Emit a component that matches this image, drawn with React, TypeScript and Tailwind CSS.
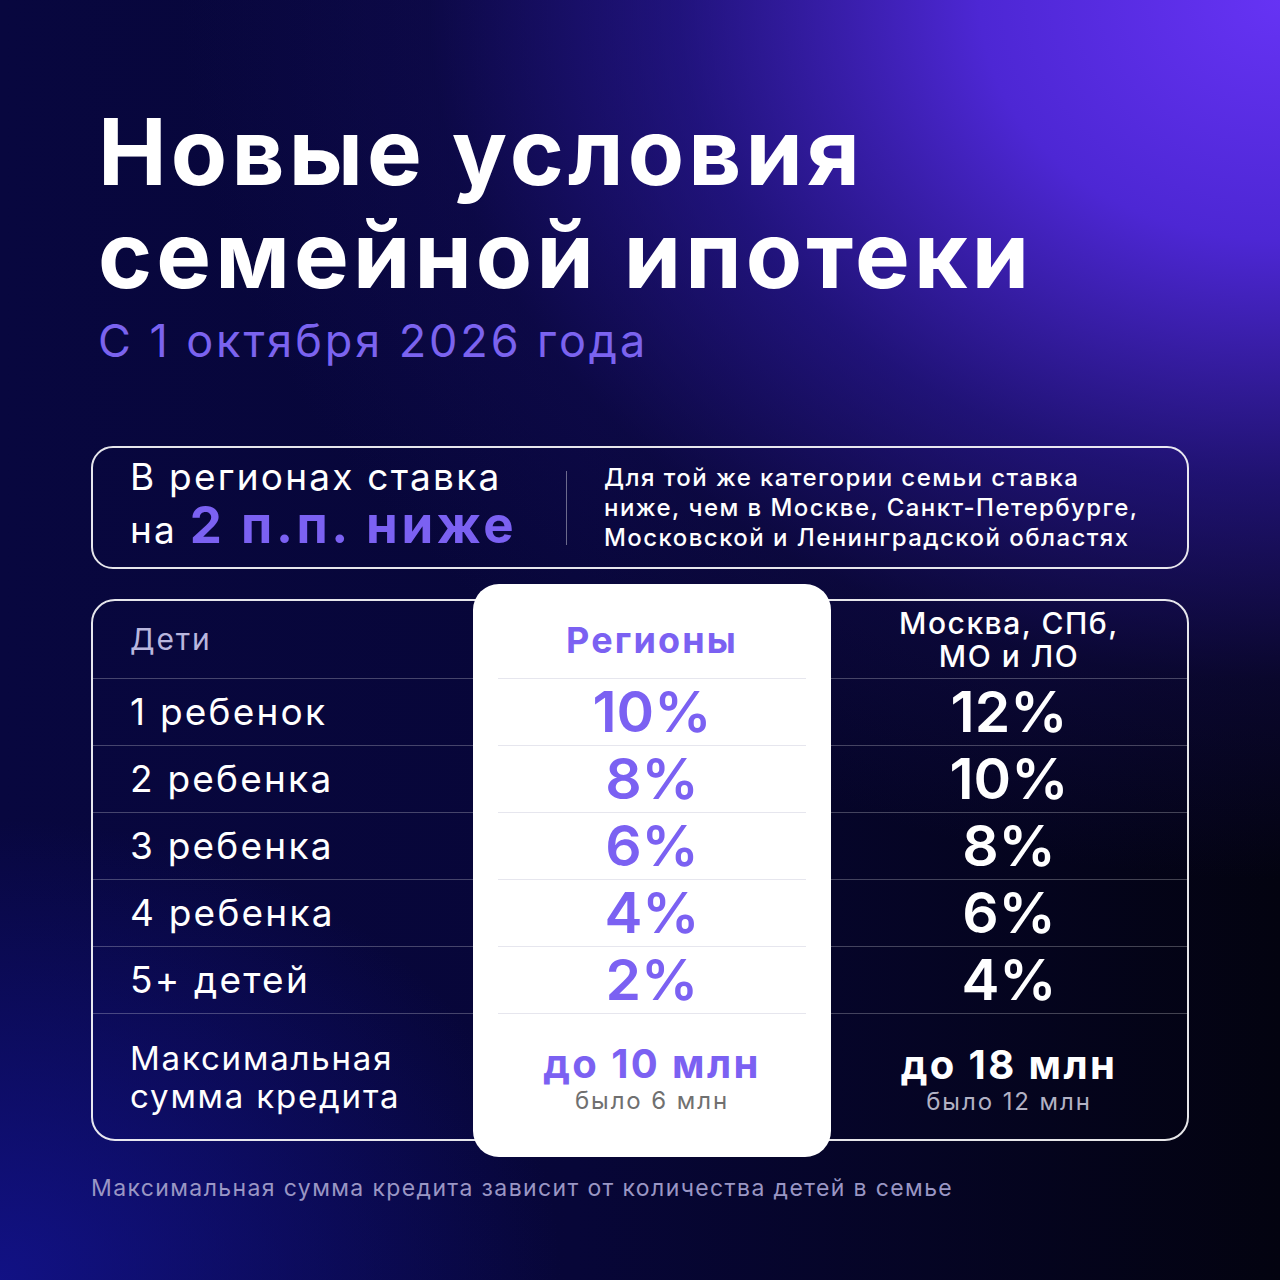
import React from 'react';

const rows = [
  { label: '1 ребенок', region: '10%', capital: '12%' },
  { label: '2 ребенка', region: '8%', capital: '10%' },
  { label: '3 ребенка', region: '6%', capital: '8%' },
  { label: '4 ребенка', region: '4%', capital: '6%' },
  { label: '5+ детей', region: '2%', capital: '4%' },
];

const App: React.FC = () => {
  return (
    <div className="w-[1280px] h-[1280px] overflow-hidden font-['Inter','Noto_Sans',sans-serif] text-white bg-[radial-gradient(ellipse_1250px_1000px_at_100%_0%,#6633f4_0%,#4d27d4_24%,rgba(50,28,175,0.6)_48%,rgba(22,14,96,0.35)_68%,rgba(12,8,70,0)_88%),radial-gradient(ellipse_780px_640px_at_0%_100%,rgba(20,20,150,0.8)_0%,rgba(20,20,150,0)_72%),linear-gradient(to_right,#08073f_0%,#070638_45%,#030310_100%)]">
      <div className="pt-[100px] pl-[98px]">
        <h1 className="text-[92px] leading-[103px] font-bold tracking-[0.045em]">
          Новые условия
          <br />
          семейной ипотеки
        </h1>
        <p className="mt-[13px] text-[45px] leading-[44px] tracking-[0.065em] text-[#7b63ef]">С 1 октября 2026 года</p>
      </div>

      <div className="px-[91px] pt-[83px]">
        {/* Info box */}
        <div className="h-[123px] rounded-[22px] border-2 border-white/90 flex items-center pl-[37px]">
          <div className="w-[400px]">
            <p className="text-[37px] leading-[40px] tracking-[0.06em]">В регионах ставка</p>
            <p className="text-[37px] leading-[56px] tracking-[0.06em]">
              на <span className="text-[51px] font-bold tracking-[0.07em] text-[#7b61f2]">2 п.п. ниже</span>
            </p>
          </div>
          <div className="ml-[36px] w-px h-[74px] bg-white/40" />
          <div className="ml-[37px] text-[24px] leading-[30px] font-medium tracking-[0.06em]">
            <p>Для той же категории семьи ставка</p>
            <p>ниже, чем в Москве, Санкт-Петербурге,</p>
            <p>Московской и Ленинградской областях</p>
          </div>
        </div>

        {/* Table */}
        <div className="mt-[30px] h-[542px] rounded-[24px] border-2 border-white/90 flex">
          <div className="w-[380px] flex flex-col">
            <div className="h-[78px] border-b border-white/25 flex items-center pl-[37px] text-[30px] tracking-[0.06em] text-[#b9b6dd]">
              Дети
            </div>
            {rows.map((r) => (
              <div key={r.label} className="h-[67px] border-b border-white/25 flex items-center pl-[37px] text-[37px] tracking-[0.06em]">
                {r.label}
              </div>
            ))}
            <div className="flex-1 flex flex-col justify-center pl-[37px] text-[33px] leading-[38px] tracking-[0.055em]">
              <p>Максимальная</p>
              <p>сумма кредита</p>
            </div>
          </div>

          <div className="relative z-10 w-[358px] -mt-[17px] -mb-[18px] bg-white rounded-[26px] flex flex-col text-[#7b61f2]">
            <div className="h-[95px] pt-[17px] mx-[25px] border-b border-[#e6e6ee] flex items-center justify-center text-[36px] font-bold tracking-[0.06em]">
              Регионы
            </div>
            {rows.map((r) => (
              <div key={r.label} className="h-[67px] mx-[25px] border-b border-[#e6e6ee] flex items-center justify-center text-[57px] font-semibold">
                {r.region}
              </div>
            ))}
            <div className="flex-1 pb-[14px] flex flex-col items-center justify-center">
              <p className="text-[40px] leading-[44px] font-bold tracking-[0.06em]">до 10 млн</p>
              <p className="text-[24px] leading-[30px] tracking-[0.08em] text-[#707070]">было 6 млн</p>
            </div>
          </div>

          <div className="flex-1 flex flex-col">
            <div className="h-[78px] border-b border-white/25 flex flex-col items-center justify-center text-[30px] leading-[33px] font-medium tracking-[0.05em]">
              <p>Москва, СПб,</p>
              <p>МО и ЛО</p>
            </div>
            {rows.map((r) => (
              <div key={r.label} className="h-[67px] border-b border-white/25 flex items-center justify-center text-[57px] font-semibold">
                {r.capital}
              </div>
            ))}
            <div className="flex-1 flex flex-col items-center justify-center pt-[6px]">
              <p className="text-[40px] leading-[44px] font-bold tracking-[0.06em]">до 18 млн</p>
              <p className="text-[24px] leading-[30px] tracking-[0.08em] text-[#b2b1c4]">было 12 млн</p>
            </div>
          </div>
        </div>

        <p className="mt-[30px] text-[23px] tracking-[0.06em] text-[#9a96c4]">
          Максимальная сумма кредита зависит от количества детей в семье
        </p>
      </div>
    </div>
  );
};

export default App;
